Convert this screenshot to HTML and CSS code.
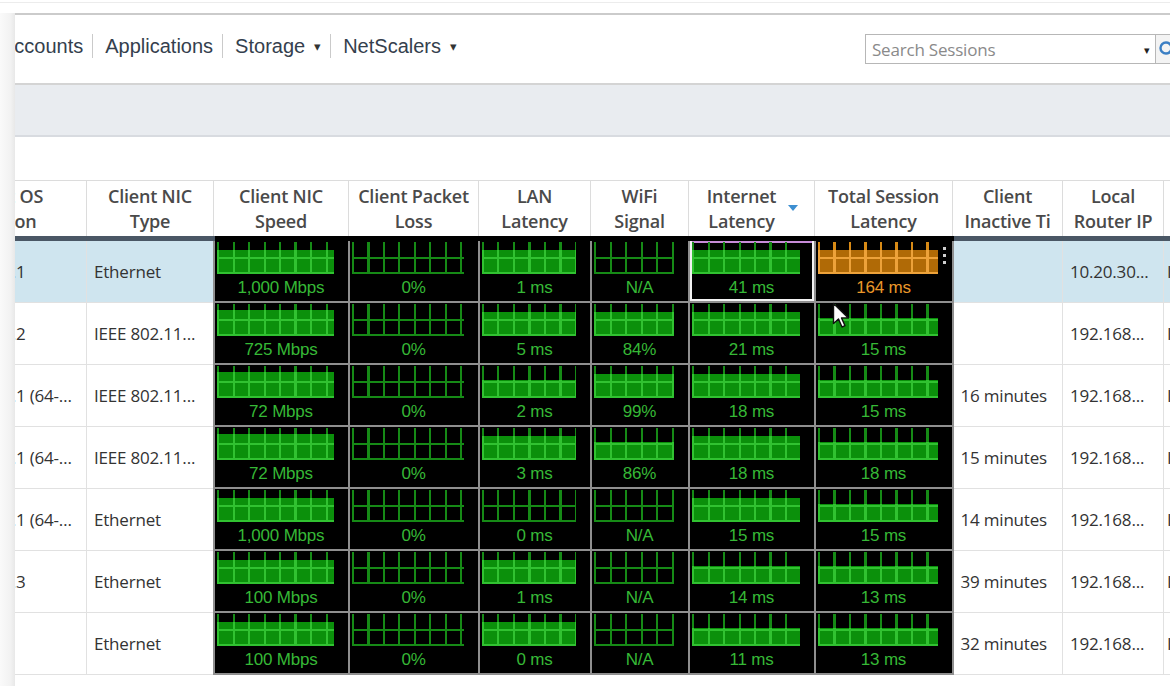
FILE: index.html
```html
<!DOCTYPE html>
<html lang="en">
<head>
<meta charset="utf-8">
<title>Sessions</title>
<link rel="stylesheet" href="styles.css">
</head>
<body>
<div class="topline"></div>
<div class="frame">
  <div class="edge"></div>
  <div class="main">
    <div class="nav">
      <ul class="menu">
        <li><a>Accounts</a></li>
        <li><a>Applications</a></li>
        <li><a>Storage</a><span class="caret">&#9662;</span></li>
        <li><a>NetScalers</a><span class="caret">&#9662;</span></li>
      </ul>
      <div class="search">
        <div class="search-box">
          <span class="placeholder">Search Sessions</span>
          <span class="search-caret">&#9662;</span>
        </div>
        <div class="search-btn">
          <svg width="18" height="18" viewBox="0 0 18 18"><circle cx="8" cy="8" r="5.5" fill="none" stroke="#3b7fc4" stroke-width="2.4"/><path d="M12 12l4.5 4.5" stroke="#3b7fc4" stroke-width="2.6"/></svg>
        </div>
      </div>
    </div>
    <div class="band"></div>
    <div class="gap"></div>
    <div class="grid-wrap">
      <table class="sessions">
        <colgroup>
          <col class="c-os"><col class="c-type"><col class="c-speed"><col class="c-loss"><col class="c-lan"><col class="c-wifi"><col class="c-net"><col class="c-total"><col class="c-idle"><col class="c-ip"><col class="c-more">
        </colgroup>
        <thead>
          <tr>
            <th>Client OS<br>Version</th>
            <th>Client NIC<br>Type</th>
            <th>Client NIC<br>Speed</th>
            <th>Client Packet<br>Loss</th>
            <th>LAN<br>Latency</th>
            <th>WiFi<br>Signal</th>
            <th><div class="sorted"><span>Internet<br>Latency</span><span class="sort-arrow"></span></div></th>
            <th>Total Session<br>Latency</th>
            <th>Client<br>Inactive Ti</th>
            <th>Local<br>Router IP</th>
            <th>Session<br>Type</th>
          </tr>
        </thead>
        <tbody>
          <tr class="selected">
            <td class="os">Windows 6.1</td>
            <td>Ethernet</td>
            <td class="g"><div class="chart"><div class="bar" style="height:24px"></div></div><div class="val">1,000 Mbps</div></td>
            <td class="g"><div class="chart"></div><div class="val">0%</div></td>
            <td class="g"><div class="chart"><div class="bar" style="height:24px"></div></div><div class="val">1 ms</div></td>
            <td class="g"><div class="chart"></div><div class="val">N/A</div></td>
            <td class="g focus"><div class="chart"><div class="bar" style="height:24px"></div></div><div class="val">41 ms</div></td>
            <td class="g warn"><div class="chart"><div class="bar" style="height:24px"></div></div><div class="val">164 ms</div><span class="grip"></span></td>
            <td></td>
            <td>10.20.30...</td>
            <td class="more">ICA</td>
          </tr>
          <tr>
            <td class="os">Windows 6.2</td>
            <td>IEEE 802.11...</td>
            <td class="g"><div class="chart"><div class="bar" style="height:26px"></div></div><div class="val">725 Mbps</div></td>
            <td class="g"><div class="chart"></div><div class="val">0%</div></td>
            <td class="g"><div class="chart"><div class="bar" style="height:24px"></div></div><div class="val">5 ms</div></td>
            <td class="g"><div class="chart"><div class="bar" style="height:24px"></div></div><div class="val">84%</div></td>
            <td class="g"><div class="chart"><div class="bar" style="height:24px"></div></div><div class="val">21 ms</div></td>
            <td class="g"><div class="chart"><div class="bar" style="height:18px"></div></div><div class="val">15 ms</div></td>
            <td></td>
            <td>192.168...</td>
            <td class="more">ICA</td>
          </tr>
          <tr>
            <td class="os">Windows 6.1 (64-bit)</td>
            <td>IEEE 802.11...</td>
            <td class="g"><div class="chart"><div class="bar" style="height:26px"></div></div><div class="val">72 Mbps</div></td>
            <td class="g"><div class="chart"></div><div class="val">0%</div></td>
            <td class="g"><div class="chart"><div class="bar" style="height:18px"></div></div><div class="val">2 ms</div></td>
            <td class="g"><div class="chart"><div class="bar" style="height:24px"></div></div><div class="val">99%</div></td>
            <td class="g"><div class="chart"><div class="bar" style="height:24px"></div></div><div class="val">18 ms</div></td>
            <td class="g"><div class="chart"><div class="bar" style="height:18px"></div></div><div class="val">15 ms</div></td>
            <td>16 minutes</td>
            <td>192.168...</td>
            <td class="more">ICA</td>
          </tr>
          <tr>
            <td class="os">Windows 6.1 (64-bit)</td>
            <td>IEEE 802.11...</td>
            <td class="g"><div class="chart"><div class="bar" style="height:26px"></div></div><div class="val">72 Mbps</div></td>
            <td class="g"><div class="chart"></div><div class="val">0%</div></td>
            <td class="g"><div class="chart"><div class="bar" style="height:24px"></div></div><div class="val">3 ms</div></td>
            <td class="g"><div class="chart"><div class="bar" style="height:18px"></div></div><div class="val">86%</div></td>
            <td class="g"><div class="chart"><div class="bar" style="height:24px"></div></div><div class="val">18 ms</div></td>
            <td class="g"><div class="chart"><div class="bar" style="height:18px"></div></div><div class="val">18 ms</div></td>
            <td>15 minutes</td>
            <td>192.168...</td>
            <td class="more">ICA</td>
          </tr>
          <tr>
            <td class="os">Windows 6.1 (64-bit)</td>
            <td>Ethernet</td>
            <td class="g"><div class="chart"><div class="bar" style="height:24px"></div></div><div class="val">1,000 Mbps</div></td>
            <td class="g"><div class="chart"></div><div class="val">0%</div></td>
            <td class="g"><div class="chart"></div><div class="val">0 ms</div></td>
            <td class="g"><div class="chart"></div><div class="val">N/A</div></td>
            <td class="g"><div class="chart"><div class="bar" style="height:24px"></div></div><div class="val">15 ms</div></td>
            <td class="g"><div class="chart"><div class="bar" style="height:18px"></div></div><div class="val">15 ms</div></td>
            <td>14 minutes</td>
            <td>192.168...</td>
            <td class="more">ICA</td>
          </tr>
          <tr>
            <td class="os">Windows 6.3</td>
            <td>Ethernet</td>
            <td class="g"><div class="chart"><div class="bar" style="height:24px"></div></div><div class="val">100 Mbps</div></td>
            <td class="g"><div class="chart"></div><div class="val">0%</div></td>
            <td class="g"><div class="chart"><div class="bar" style="height:24px"></div></div><div class="val">1 ms</div></td>
            <td class="g"><div class="chart"></div><div class="val">N/A</div></td>
            <td class="g"><div class="chart"><div class="bar" style="height:18px"></div></div><div class="val">14 ms</div></td>
            <td class="g"><div class="chart"><div class="bar" style="height:18px"></div></div><div class="val">13 ms</div></td>
            <td>39 minutes</td>
            <td>192.168...</td>
            <td class="more">ICA</td>
          </tr>
          <tr>
            <td class="os">Windows</td>
            <td>Ethernet</td>
            <td class="g"><div class="chart"><div class="bar" style="height:24px"></div></div><div class="val">100 Mbps</div></td>
            <td class="g"><div class="chart"></div><div class="val">0%</div></td>
            <td class="g"><div class="chart"><div class="bar" style="height:24px"></div></div><div class="val">0 ms</div></td>
            <td class="g"><div class="chart"></div><div class="val">N/A</div></td>
            <td class="g"><div class="chart"><div class="bar" style="height:18px"></div></div><div class="val">11 ms</div></td>
            <td class="g"><div class="chart"><div class="bar" style="height:18px"></div></div><div class="val">13 ms</div></td>
            <td>32 minutes</td>
            <td>192.168...</td>
            <td class="more">ICA</td>
          </tr>
        </tbody>
      </table>
    </div>
  </div>
</div>
<svg class="pointer" width="20" height="28" viewBox="0 0 20 28"><path d="M1.5 1.5v20l5-4.5 3.5 8 3-1.3-3.5-7.8h6.8z" fill="#fff" stroke="#111" stroke-width="1.4" stroke-linejoin="round"/></svg>
</body>
</html>
```

FILE: styles.css
```css
html, body {
  margin: 0;
  padding: 0;
  background: #fff;
  width: 1170px;
  height: 686px;
  overflow: hidden;
  font-family: "Open Sans", "Noto Sans", sans-serif;
}

.topline {
  height: 13px;
  background: linear-gradient(to bottom, #fff 0 2px, #ececec 2px 3px, #fff 3px);
}

.frame {
  display: flex;
  height: 673px;
}

.edge {
  width: 15px;
  flex: none;
  background: linear-gradient(to right, #fafafa, #f2f2f2 70%, #e8e8e8);
}

.main {
  flex: 1;
  min-width: 0;
  overflow: hidden;
  background: #fff;
}

/* top navigation */
.nav {
  height: 68px;
  border-top: 2px solid #cbcbcb;
  border-bottom: 2px solid #d4d4d4;
  display: flex;
  align-items: center;
}

.menu {
  list-style: none;
  margin: -6px 0 0 -14px;
  padding: 0;
  display: flex;
  align-items: center;
  font-family: "Liberation Sans", Arial, sans-serif;
  font-size: 20px;
  color: #34404d;
}

.menu li {
  display: flex;
  align-items: center;
  height: 24px;
  padding: 0 9px 0 12px;
  border-left: 1px solid #cacaca;
}

.menu li:first-child {
  border-left: none;
  padding-left: 0;
}

.caret {
  font-size: 13px;
  margin-left: 9px;
  color: #333;
  margin-top: 1px;
}

.search {
  margin-left: auto;
  margin-right: -24px;
  display: flex;
  align-items: stretch;
  height: 30px;
  margin-top: 0;
}

.search-box {
  border: 1px solid #b7b7b7;
  display: flex;
  align-items: center;
  justify-content: space-between;
  padding: 0 5px 0 6px;
  box-sizing: border-box;
  width: 291px;
}

.placeholder {
  color: #8a8a8a;
  font-size: 17px;
  letter-spacing: -0.2px;
}

.search-caret {
  font-size: 11px;
  color: #222;
}

.search-btn {
  width: 38px;
  border: 1px solid #b7b7b7;
  border-left: none;
  background: #f3f3f3;
  display: flex;
  align-items: center;
  padding-left: 2px;
  box-sizing: border-box;
}

.band {
  height: 50px;
  background: #e9ecf0;
  border-bottom: 2px solid #d8dbe0;
}

.gap {
  height: 43px;
}

/* session grid */
.sessions {
  border-collapse: collapse;
  table-layout: fixed;
  width: 1357px;
  margin-left: -89px;
}

.c-os { width: 160px; }
.c-type { width: 127px; }
.c-speed { width: 135px; }
.c-loss { width: 130px; }
.c-lan { width: 112px; }
.c-wifi { width: 98px; }
.c-net { width: 126px; }
.c-total { width: 138px; }
.c-idle { width: 110px; }
.c-ip { width: 101px; }
.c-more { width: 120px; }

.sessions th {
  height: 55px;
  padding: 0;
  border: 1px solid #dcdcdc;
  border-bottom: 1px solid #b9c2cc;
  font-weight: 600;
  font-size: 18px;
  line-height: 25px;
  letter-spacing: -0.2px;
  color: #4a4a4a;
  text-align: center;
  vertical-align: middle;
  white-space: nowrap;
  overflow: hidden;
}

.sessions th:first-child {
  padding-right: 4px;
}

.sorted {
  display: flex;
  align-items: center;
  justify-content: center;
  gap: 12px;
  padding-left: 2px;
}

.sort-arrow {
  width: 0;
  height: 0;
  border-left: 5px solid transparent;
  border-right: 5px solid transparent;
  border-top: 6px solid #3d8fd1;
  margin-top: -2px;
}

.sessions td {
  height: 60px;
  padding: 0 7px;
  border: 1px solid #e1e1e1;
  font-size: 17px;
  color: #333;
  white-space: nowrap;
  overflow: hidden;
  text-overflow: ellipsis;
  vertical-align: middle;
  letter-spacing: -0.2px;
}

.sessions td.os {
  padding-left: 0;
  padding-right: 9px;
}

.sessions td.more {
  padding-left: 3px;
}

.selected td {
  background: #cfe5ef;
  border-top: 5px solid #4a5765;
}

.sessions td.g {
  background: #000;
  padding: 0;
  border: 2px solid #8f8f8f;
  vertical-align: top;
  position: relative;
}

.selected td.g {
  border-top: 5px solid #000;
}

.chart {
  height: 32px;
  margin: 1px 14px 0 2px;
  display: flex;
  flex-direction: column;
  justify-content: flex-end;
  background-image:
    repeating-linear-gradient(to right, #168a16 0 2px, transparent 2px 15.5px),
    linear-gradient(to top, #168a16 0 2px, transparent 2px 15px, #168a16 15px 17px, transparent 17px);
}

.bar {
  background-color: #0b900b;
  background-image:
    repeating-linear-gradient(to right, #31c231 0 2px, transparent 2px 15.5px),
    linear-gradient(to top, #31c231 0 2px, transparent 2px 15px, #31c231 15px 17px, transparent 17px);
}

.val {
  text-align: center;
  font-family: "Liberation Sans", Arial, sans-serif;
  font-size: 17px;
  line-height: 27px;
  color: #36b836;
}

.warn .chart {
  background-image:
    repeating-linear-gradient(to right, #d78a16 0 2px, transparent 2px 15.5px),
    linear-gradient(to top, #d78a16 0 2px, transparent 2px 15px, #d78a16 15px 17px, transparent 17px);
}

.warn .bar {
  height: 24px;
  background-color: #b06a06;
  background-image:
    repeating-linear-gradient(to right, #eda23a 0 2px, transparent 2px 15.5px),
    linear-gradient(to top, #eda23a 0 2px, transparent 2px 15px, #eda23a 15px 17px, transparent 17px);
}

.warn .val {
  color: #ea982a;
}

.grip {
  position: absolute;
  right: 6px;
  top: 6px;
  width: 3px;
  height: 3px;
  background: #cfcfcf;
  box-shadow: 0 7px 0 #cfcfcf, 0 14px 0 #cfcfcf;
}

.focus {
  box-shadow: inset 2px 0 #f2f2f2, inset -2px 0 #f2f2f2, inset 0 -2px #f2f2f2, inset 0 2px #c78bd8;
}

.pointer {
  position: absolute;
  left: 832px;
  top: 302px;
}
```
